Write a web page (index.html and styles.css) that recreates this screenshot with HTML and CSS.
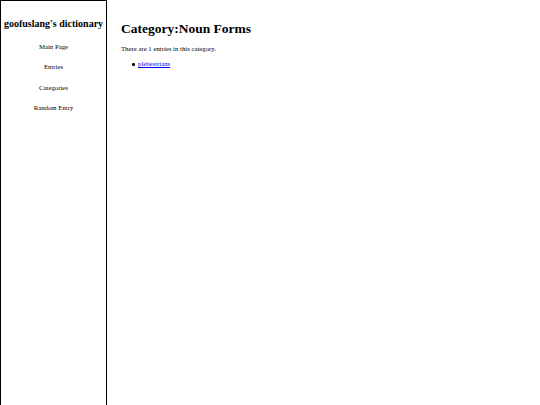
FILE: index.html
```html
<!DOCTYPE html>
<html>
<head>
<meta charset="utf-8">
<title>Category:Noun Forms</title>
<link rel="stylesheet" href="styles.css">
</head>
<body>
<div class="page">
  <nav class="sidebar">
    <h2 class="site-title">goofuslang's dictionary</h2>
    <ul class="nav">
      <li><a href="#">Main Page</a></li>
      <li><a href="#">Entries</a></li>
      <li><a href="#">Categories</a></li>
      <li><a href="#">Random Entry</a></li>
    </ul>
  </nav>
  <main class="content">
    <h1 class="title">Category:Noun Forms</h1>
    <p class="count">There are 1 entries in this category.</p>
    <ul class="entries">
      <li><a href="#">plebestrians</a></li>
    </ul>
  </main>
</div>
</body>
</html>
```

FILE: styles.css
```css
html, body {
  margin: 0;
  padding: 0;
  background: #fff;
}
body {
  font-family: "Liberation Serif", "Times New Roman", serif;
  font-size: 6.75px;
  color: #000;
}
.page {
  display: flex;
  align-items: flex-start;
  min-height: 405px;
}
.sidebar {
  box-sizing: border-box;
  width: 107px;
  min-height: 420px;
  border: 1px solid #000;
  border-bottom: none;
  text-align: center;
  flex-shrink: 0;
}
.site-title {
  font-size: 10px;
  font-weight: bold;
  margin: 17px 0 0;
  line-height: 12px;
}
.nav {
  list-style: none;
  margin: 13px 0 0;
  padding: 0;
}
.nav li {
  height: 20.25px;
  line-height: 8px;
}
.nav a {
  color: #000;
  text-decoration: none;
}
.content {
  padding-left: 14px;
}
.title {
  font-size: 13.5px;
  font-weight: bold;
  margin: 21px 0 0;
  line-height: 16px;
}
.count {
  margin: 8px 0 0;
  line-height: 8px;
}
.entries {
  list-style: none;
  margin: 7px 0 0;
  padding-left: 17px;
  line-height: 8px;
}
.entries li {
  position: relative;
}
.entries li::before {
  content: "";
  position: absolute;
  left: -6px;
  top: 3px;
  width: 2.5px;
  height: 2.5px;
  border-radius: 50%;
  background: #000;
}
.entries a {
  color: #0000ee;
}
```
